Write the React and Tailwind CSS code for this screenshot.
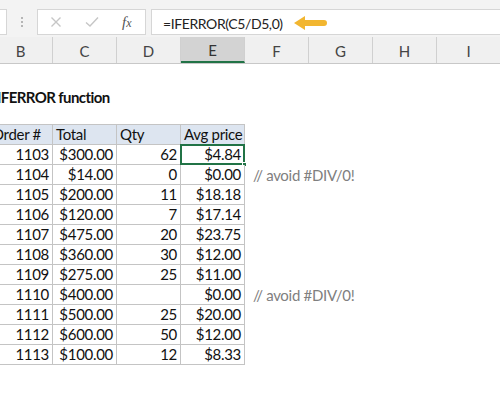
import React from 'react';

const rows = [
  { order: 1103, total: '$300.00', qty: '62', avg: '$4.84' },
  { order: 1104, total: '$14.00', qty: '0', avg: '$0.00', note: '// avoid #DIV/0!' },
  { order: 1105, total: '$200.00', qty: '11', avg: '$18.18' },
  { order: 1106, total: '$120.00', qty: '7', avg: '$17.14' },
  { order: 1107, total: '$475.00', qty: '20', avg: '$23.75' },
  { order: 1108, total: '$360.00', qty: '30', avg: '$12.00' },
  { order: 1109, total: '$275.00', qty: '25', avg: '$11.00' },
  { order: 1110, total: '$400.00', qty: '', avg: '$0.00', note: '// avoid #DIV/0!' },
  { order: 1111, total: '$500.00', qty: '25', avg: '$20.00' },
  { order: 1112, total: '$600.00', qty: '50', avg: '$12.00' },
  { order: 1113, total: '$100.00', qty: '12', avg: '$8.33' },
];

const columns = ['B', 'C', 'D', 'E', 'F', 'G', 'H', 'I'];

function FormulaBar() {
  return (
    <div className="flex h-[37px] items-start bg-[#f3f3f3] pt-[9px]">
      <div className="h-[26px] w-[7px] border-y border-r border-[#d6d6d6] bg-white" />
      <div className="flex h-[26px] w-[30px] flex-col items-center justify-center gap-[2px]">
        <span className="h-[2px] w-[2px] bg-[#b5b5b5]" />
        <span className="h-[2px] w-[2px] bg-[#b5b5b5]" />
        <span className="h-[2px] w-[2px] bg-[#b5b5b5]" />
      </div>
      <div className="flex h-[26px] w-[109px] items-center border border-[#d6d6d6] bg-white">
        <svg className="ml-[12px]" width="12" height="12" viewBox="0 0 12 12">
          <path d="M1.5 1.5 L10.5 10.5 M10.5 1.5 L1.5 10.5" stroke="#c6c6c6" strokeWidth="1.4" fill="none" />
        </svg>
        <svg className="ml-[23px]" width="14" height="12" viewBox="0 0 14 12">
          <path d="M1 6.5 L5 10 L13 1.5" stroke="#c6c6c6" strokeWidth="1.4" fill="none" />
        </svg>
        <span className="ml-[23px] font-['Liberation_Serif',serif] text-[15px] italic text-[#555]">
          f<span className="text-[12px]">x</span>
        </span>
      </div>
      <div className="ml-[5px] flex h-[26px] flex-1 items-center border-y border-l border-[#d6d6d6] bg-white pl-[11px] pt-[2px]">
        <span className="text-[14px] tracking-[-0.4px] text-[#222]">=IFERROR(C5/D5,0)</span>
        <svg className="ml-[10px]" width="36" height="16" viewBox="0 0 36 16">
          <path d="M1 8 L12 1 L12 5 L31 5 Q34 5 34 8 Q34 11 31 11 L12 11 L12 15 Z" fill="#f2b630" />
        </svg>
      </div>
    </div>
  );
}

function ColumnHeaders() {
  return (
    <div className="ml-[-11px] flex h-[27px] border-b border-[#c8c8c8] bg-[#f0f0f0]">
      {columns.map(c => (
        <div
          key={c}
          className={
            c === 'E'
              ? 'flex w-[64px] shrink-0 items-end justify-center border-b-2 border-r border-r-[#d0d0d0] border-b-[#217346] bg-[#d3d3d3] pb-[3px] text-[15px] leading-none text-[#333]'
              : 'flex w-[64px] shrink-0 items-end justify-center border-r border-[#d0d0d0] pb-[4px] text-[15px] leading-none text-[#444]'
          }
        >
          {c}
        </div>
      ))}
    </div>
  );
}

function Cell({ children, right, head, selected }) {
  return (
    <div
      className={
        'relative flex h-[20px] w-[64px] shrink-0 items-center whitespace-nowrap border-b border-r border-[#c4c4c4] px-[3px] ' +
        (right ? 'justify-end ' : 'justify-start ') +
        (head ? 'bg-[#dde5f0]' : 'bg-white')
      }
    >
      {children}
      {selected && (
        <>
          <div className="absolute -left-[1px] -top-[1px] h-[21px] w-[65px] border-2 border-[#217346]" />
          <div className="absolute -bottom-[3px] -right-[3px] h-[5px] w-[5px] border border-white bg-[#217346]" />
        </>
      )}
    </div>
  );
}

export default function App() {
  return (
    <div className="h-[400px] w-[500px] overflow-hidden bg-white font-['Lato',sans-serif] text-[#111]">
      <FormulaBar />
      <ColumnHeaders />
      <div className="text-[15px] tracking-[-0.3px]">
        <div className="h-[21px]" />
        <div className="ml-[-3px] flex h-[24px] items-center text-[15px] font-bold tracking-[-0.6px]">
          IFERROR function
        </div>
        <div className="h-[15px]" />
        <div className="ml-[-11px] flex">
          <div className="flex border-t border-[#c4c4c4]">
            <Cell head>Order #</Cell>
            <Cell head>Total</Cell>
            <Cell head>Qty</Cell>
            <Cell head>Avg price</Cell>
          </div>
        </div>
        {rows.map((r, i) => (
          <div key={r.order} className="ml-[-11px] flex">
            <Cell right>{r.order}</Cell>
            <Cell right>{r.total}</Cell>
            <Cell right>{r.qty}</Cell>
            <Cell right selected={i === 0}>{r.avg}</Cell>
            {r.note && (
              <div className="flex h-[20px] items-center pl-[8px] text-[#808080]">{r.note}</div>
            )}
          </div>
        ))}
      </div>
    </div>
  );
}
